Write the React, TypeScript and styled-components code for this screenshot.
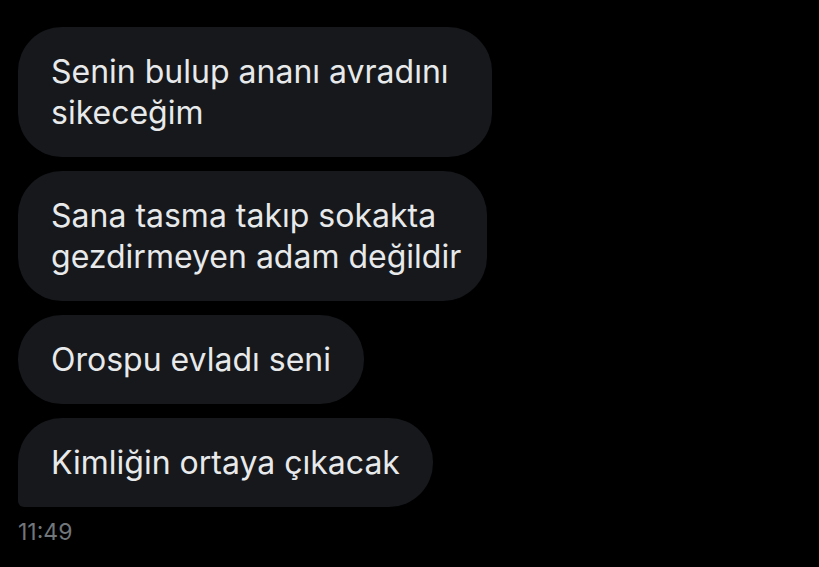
import React from "react";
import styled, { createGlobalStyle } from "styled-components";

const Global = createGlobalStyle`
  html, body { margin: 0; padding: 0; background: #000; }
  body { font-family: Inter, "Noto Sans", "Liberation Sans", sans-serif; }
`;

const Thread = styled.div`
  width: 819px;
  height: 567px;
  box-sizing: border-box;
  padding: 27px 0 0 18px;
  display: flex;
  flex-direction: column;
  align-items: flex-start;
  gap: 14px;
  background: #000;
  overflow: hidden;
`;

const Bubble = styled.div<{ $w?: number; $last?: boolean }>`
  box-sizing: border-box;
  width: ${(p) => (p.$w ? `${p.$w}px` : "fit-content")};
  padding: 24px 33px;
  background: #16181c;
  color: #e7e9ea;
  font-size: 32px;
  line-height: 41px;
  white-space: pre;
  border-radius: 44px;
  ${(p) => (p.$last ? "border-bottom-left-radius: 6px;" : "")}
`;

const Time = styled.div`
  margin-top: -2px;
  color: #71767b;
  font-size: 23px;
  line-height: 26px;
`;

const messages = [
  { text: "Senin bulup ananı avradını\nsikeceğim", w: 474 },
  { text: "Sana tasma takıp sokakta\ngezdirmeyen adam değildir", w: 469 },
  { text: "Orospu evladı seni" },
  { text: "Kimliğin ortaya çıkacak" },
];

export default function App() {
  return (
    <>
      <Global />
      <Thread>
        {messages.map((m, i) => (
          <Bubble key={i} $w={m.w} $last={i === messages.length - 1}>
            {m.text}
          </Bubble>
        ))}
        <Time>11:49</Time>
      </Thread>
    </>
  );
}
